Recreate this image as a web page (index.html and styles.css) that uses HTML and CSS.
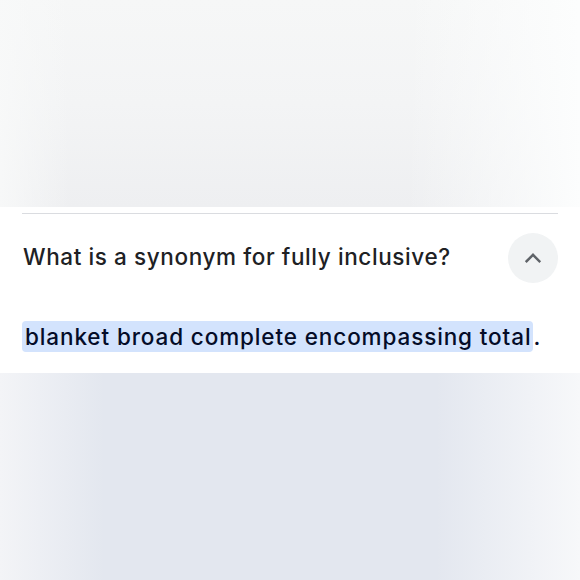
FILE: index.html
```html
<!DOCTYPE html>
<html lang="en">
<head>
<meta charset="utf-8">
<title>Synonym</title>
<link rel="stylesheet" href="styles.css">
</head>
<body>
<div class="page">
  <div class="top"></div>
  <section class="card">
    <div class="divider"></div>
    <div class="question-row">
      <h2 class="question">What is a synonym for fully inclusive?</h2>
      <button class="toggle" aria-label="Collapse">
        <svg width="24" height="24" viewBox="0 0 24 24"><path d="M5.6 15.2 12 8.8l6.4 6.4" fill="none" stroke="#5f6368" stroke-width="2.4" stroke-linecap="square"/></svg>
      </button>
    </div>
    <p class="answer"><mark class="hl">blanket broad complete encompassing total</mark>.</p>
  </section>
  <div class="bottom"></div>
</div>
</body>
</html>
```
FILE: styles.css
```css
html, body {
  margin: 0;
  padding: 0;
  height: 100%;
}
body {
  font-family: Inter, Roboto, "Liberation Sans", sans-serif;
  background: #fff;
}
.page {
  display: flex;
  flex-direction: column;
  height: 580px;
}
.top {
  height: 207px;
  flex: none;
  background:
    linear-gradient(90deg, rgba(248,249,249,0.9) 0%, rgba(248,249,249,0) 12%, rgba(248,249,249,0) 70%, rgba(252,253,253,1) 100%),
    linear-gradient(180deg, #f6f7f7 0%, #f3f4f5 50%, #eeeff1 100%);
}
.card {
  background: #fff;
  padding: 6px 22px 21px;
  flex: none;
}
.divider {
  height: 1px;
  background: #dadce0;
}
.question-row {
  display: flex;
  align-items: center;
  justify-content: space-between;
  padding-top: 18px;
  height: 51px;
}
.question {
  margin: 0 0 2px;
  font-weight: 500;
  font-size: 22.5px;
  letter-spacing: 0.6px;
  color: #202124;
  padding-left: 1px;
}
.toggle {
  width: 50px;
  height: 50px;
  border-radius: 50%;
  border: none;
  background: #f1f3f4;
  display: flex;
  align-items: center;
  justify-content: center;
  padding: 0;
}
.answer {
  margin: 38px 0 0;
  font-size: 22.5px;
  font-weight: 500;
  letter-spacing: 0.88px;
  line-height: 31px;
  color: #040c28;
}
.hl {
  display: inline-block;
  line-height: 31px;
  background: #d3e3fd;
  color: #040c28;
  border-radius: 4px;
  padding: 0 2px 0 3px;
}
.bottom {
  flex: 1;
  background:
    linear-gradient(90deg, #f3f4f7 0%, rgba(227,231,239,0) 18%, rgba(227,231,239,0) 75%, #f7f8fa 100%),
    #e3e7ef;
}
```
